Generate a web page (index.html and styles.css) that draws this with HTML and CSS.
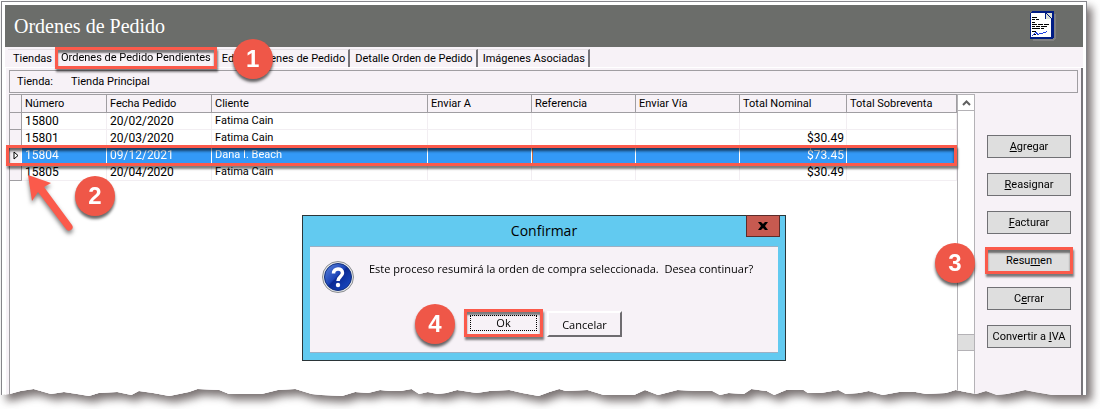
FILE: index.html
```html
<!DOCTYPE html>
<html lang="es">
<head>
    <meta charset="utf-8">
    <meta name="viewport" content="width=device-width, initial-scale=1">
    <title>Ordenes de Pedido</title>
    <link rel="stylesheet" href="styles.css">
</head>
<body>
<div class="shadow">
<div class="window">

    <header class="titlebar">
        <h1>Ordenes de Pedido</h1>
        <svg class="doc-icon" width="26" height="30" viewBox="0 0 26 30" shape-rendering="crispEdges">
            <path d="M3 3h23v24l-3 3H3z" fill="#808080"/>
            <path d="M0 2l2-2h22v26l-2 2H0z" fill="#001c84"/>
            <path d="M1 2h14v6h6v18H1z" fill="#fff"/>
            <path d="M16 2h6v6h-6z" fill="#dfe3d8"/>
            <path d="M16 2l6 6" stroke="#001c84"/>
            <path d="M2 6.500h5M2 8.500h3M6 8.500h3M2 11.500h3M2 13.500h5M8 13.500h5M14 13.500h5M2 15.500h3M6 15.500h4M11 15.500h6M2 17.500h8M11 17.500h3M2 20.500h4M3 23.500h3" stroke="#000"/>
            <path d="M2 25l4-4 2 3 2-2 2 1 2-2 1 1 2-2" fill="none" stroke="#1c3fe0"/>
        </svg>
    </header>

    <nav class="tabs">
        <button type="button" class="tab">Tiendas</button>
        <div class="tab-current">
            <button type="button" class="tab tab-active marked">Ordenes de Pedido Pendientes</button>
            <span class="step step-1">1</span>
        </div>
        <button type="button" class="tab">Editar Ordenes de Pedido</button>
        <button type="button" class="tab">Detalle Orden de Pedido</button>
        <button type="button" class="tab">Imágenes Asociadas</button>
    </nav>

    <main class="page">
        <div class="store"><span>Tienda:</span><span>Tienda Principal</span></div>

        <div class="content">
            <div class="list">
                <table class="orders">
                    <colgroup>
                        <col class="c-mark"><col class="c-num"><col class="c-date"><col class="c-client">
                        <col class="c-ref"><col class="c-ref"><col class="c-ref"><col class="c-total"><col>
                    </colgroup>
                    <thead>
                        <tr>
                            <th></th><th>Número</th><th>Fecha Pedido</th><th>Cliente</th><th>Enviar A</th>
                            <th>Referencia</th><th>Enviar Vía</th><th>Total Nominal</th><th>Total Sobreventa</th>
                        </tr>
                    </thead>
                    <tbody>
                        <tr>
                            <td></td><td class="digits">15800</td><td class="digits">20/02/2020</td><td>Fatima Cain</td><td></td>
                            <td></td><td></td><td class="digits num"></td><td></td>
                        </tr>
                        <tr>
                            <td></td><td class="digits">15801</td><td class="digits">20/03/2020</td><td>Fatima Cain</td><td></td>
                            <td></td><td></td><td class="digits num">$30.49</td><td></td>
                        </tr>
                        <tr class="selected">
                            <td><svg class="pointer" width="6" height="9" viewBox="0 0 6 9"><path d="M1 1v7l4-3.500z" fill="#fff" stroke="#000"/></svg></td>
                            <td class="digits">15804</td><td class="digits">09/12/2021</td><td>Dana I. Beach</td><td></td>
                            <td class="focus"></td><td></td><td class="digits num">$73.45</td><td></td>
                        </tr>
                        <tr>
                            <td></td><td class="digits">15805</td><td class="digits">20/04/2020</td><td>Fatima Cain</td><td></td>
                            <td></td><td></td><td class="digits num">$30.49</td><td></td>
                        </tr>
                    </tbody>
                </table>
                <svg class="arrow" width="60" height="68" viewBox="0 0 60 68">
                    <path d="M8 4L31 12L24 16L52 54Q54 57 51 59Q48 61 46 58L18 21L12 30Z" fill="#fb5a4b"/>
                </svg>
                <span class="step step-2">2</span>
            </div>

            <div class="scrollbar">
                <button type="button" class="scroll-up" aria-label="Subir">
                    <svg width="9" height="6" viewBox="0 0 9 6"><path d="M1 5l3.500-3.500L8 5" fill="none" stroke="#606060" stroke-width="2"/></svg>
                </button>
                <div class="scroll-thumb"></div>
            </div>

            <div class="actions">
                <button type="button" class="action"><u>A</u>gregar</button>
                <button type="button" class="action"><u>R</u>easignar</button>
                <button type="button" class="action"><u>F</u>acturar</button>
                <div class="action-current">
                    <button type="button" class="action marked">Resu<u>m</u>en</button>
                    <span class="step step-3">3</span>
                </div>
                <button type="button" class="action">C<u>e</u>rrar</button>
                <button type="button" class="action">Convertir a <u>I</u>VA</button>
            </div>
        </div>
    </main>

    <div class="dialog" role="dialog" aria-labelledby="dialog-title">
        <h2 id="dialog-title">Confirmar</h2>
        <button type="button" class="close" aria-label="Cerrar">
            <svg width="10" height="8" viewBox="0 0 10 8"><path d="M0 0h3l2 2 2-2h3L7 4l3 4H7L5 6 3 8H0l3-4z" fill="#000"/></svg>
        </button>
        <div class="dialog-body">
            <div class="message">
                <svg width="32" height="32" viewBox="0 0 32 32">
                    <defs>
                        <linearGradient id="ball" x1="0" y1="0" x2="1" y2="1">
                            <stop offset="0" stop-color="#5e86dc"/>
                            <stop offset=".45" stop-color="#1d45b8"/>
                            <stop offset=".5" stop-color="#0a2a94"/>
                            <stop offset="1" stop-color="#1b50cc"/>
                        </linearGradient>
                    </defs>
                    <circle cx="16" cy="16" r="15.500" fill="#e4e6e8" stroke="#8a8d90"/>
                    <circle cx="16" cy="16" r="13.500" fill="url(#ball)" stroke="#12307e"/>
                    <path d="M11.500 12.500C11.500 6.500 20.500 6.500 20.500 12C20.500 15.500 16 15.500 16 20" fill="none" stroke="#fff" stroke-width="3.500"/>
                    <circle cx="16" cy="24" r="2.200" fill="#fff"/>
                </svg>
                <p>Este proceso resumirá la orden de compra seleccionada.&nbsp; Desea continuar?</p>
            </div>
            <div class="dialog-buttons">
                <div class="ok-current">
                    <button type="button" class="dialog-button ok marked"><span>Ok</span></button>
                    <span class="step step-4">4</span>
                </div>
                <button type="button" class="dialog-button">Cancelar</button>
            </div>
        </div>
    </div>

</div>
</div>
</body>
</html>
```
FILE: styles.css
```css
* {
  box-sizing: border-box;
}

body {
  margin: 0;
  background: #fff;
  font-family: Roboto, "Liberation Sans", sans-serif;
  font-size: 11px;
  color: #000;
  overflow: hidden;
}

button {
  font: inherit;
  color: inherit;
  margin: 0;
  padding: 0;
}

.shadow {
  padding: 1px 13px 13px 1px;
  filter: drop-shadow(5px 6px 4px rgba(50, 40, 40, 0.65));
}

/* torn paper edge at the bottom */
.window {
  position: relative;
  display: flex;
  flex-direction: column;
  min-height: calc(100vh - 13px);
  border: 1px solid #85858a;
  border-bottom: 0;
  padding: 3px 3px 0;
  background: #fff;
  clip-path: polygon(0 0, 100% 0, 100% calc(100% - 2px),
    96.8% calc(100% - 2px), 95.2% calc(100% - 5px), 94.3% calc(100% - 7px), 93.5% calc(100% - 5px),
    92.6% calc(100% - 3px), 91.7% calc(100% - 2px), 90.7% calc(100% - 6px), 89.8% calc(100% - 3px),
    88.8% calc(100% - 5px), 87.9% calc(100% - 7px), 87% calc(100% - 4px), 85.2% calc(100% - 3px),
    84.2% calc(100% - 5px), 82.7% calc(100% - 5px), 81.2% calc(100% - 2px), 79.9% calc(100% - 6px),
    79% calc(100% - 4px), 77.8% calc(100% - 3px), 77.1% calc(100% - 7px), 75.5% calc(100% - 4px),
    74.3% calc(100% - 4px), 73.9% calc(100% - 7px), 72.3% calc(100% - 7px), 71.2% calc(100% - 2px),
    70.5% calc(100% - 6px), 69.1% calc(100% - 8px), 68.4% calc(100% - 3px), 67% calc(100% - 4px),
    66.2% calc(100% - 2px), 65.5% calc(100% - 6px), 64% calc(100% - 6px), 62.3% calc(100% - 7px),
    60.5% calc(100% - 2px), 59.3% calc(100% - 7px), 58.3% calc(100% - 2px), 55.5% calc(100% - 2px),
    54% calc(100% - 7px), 52% calc(100% - 6px), 51.4% calc(100% - 8px), 50.5% calc(100% - 5px),
    49.5% calc(100% - 1px), 48% calc(100% - 4px), 46.8% calc(100% - 7px), 45% calc(100% - 6px),
    43.8% calc(100% - 4px), 42% calc(100% - 7px), 41% calc(100% - 4px), 40.2% calc(100% - 3px),
    39.3% calc(100% - 5px), 38.5% calc(100% - 3px), 37.8% calc(100% - 8px), 36.8% calc(100% - 6px),
    35.8% calc(100% - 6px), 34.9% calc(100% - 7px), 33.8% calc(100% - 4px), 32.6% calc(100% - 5px),
    31.4% calc(100% - 1px), 29.5% calc(100% - 2px), 28.6% calc(100% - 3px), 27.1% calc(100% - 8px),
    25.5% calc(100% - 7px), 24% calc(100% - 3px), 22.3% calc(100% - 3px), 21% calc(100% - 3px),
    20.1% calc(100% - 7px), 18.1% calc(100% - 8px), 17.3% calc(100% - 5px), 15.5% calc(100% - 1px),
    14% calc(100% - 4px), 12.7% calc(100% - 6px), 12% calc(100% - 2px), 10.7% calc(100% - 5px),
    9% calc(100% - 4px), 8.1% calc(100% - 1px), 7% calc(100% - 3px), 5.8% calc(100% - 5px),
    4.6% calc(100% - 3px), 3% calc(100% - 8px), 1.8% calc(100% - 6px), 0.8% calc(100% - 3px),
    0 calc(100% - 2px));
}

.titlebar {
  display: flex;
  align-items: center;
  justify-content: space-between;
  height: 42px;
  padding: 0 27px 0 9px;
  background: #6b6d6a;
}

.titlebar h1 {
  margin: 0;
  font-family: "Liberation Serif", serif;
  font-size: 20px;
  font-weight: normal;
  color: #fff;
}

/* tabs */
.tabs {
  display: flex;
  height: 21px;
  padding: 2px 3px 0;
  background: #f7f2f7;
  border-bottom: 1px solid #fff;
}

.tab {
  height: 18px;
  padding: 0 3px 0 5px;
  background: none;
  border: 0;
  border-top: 1px solid #e4dfe4;
  border-right: 2px solid #77757a;
  white-space: nowrap;
}

.tab:first-child {
  border-right: 0;
}

.tab-current {
  position: relative;
  margin-top: -2px;
}

.tab-active {
  height: 22px;
  padding: 0 6px 2px;
  border: 0;
}

.marked {
  position: relative;
}

.marked::after {
  content: "";
  position: absolute;
  inset: 0;
  border: 3px solid #fb5a4b;
  box-shadow: 1px 3px 2px rgba(0, 0, 0, 0.5), inset 0 3px 2px rgba(0, 0, 0, 0.5);
}

/* numbered steps */
.step {
  position: absolute;
  z-index: 2;
  width: 40px;
  height: 40px;
  border-radius: 50%;
  background: #ef5748;
  box-shadow: 0 3px 3px rgba(0, 0, 0, 0.6);
  color: #fff;
  font: bold 24px/40px "Liberation Sans", sans-serif;
  text-align: center;
}

.step-1 {
  top: -8px;
  right: -56px;
}

.step-2 {
  top: 81px;
  left: 65px;
}

.step-3 {
  top: -6px;
  left: -52px;
}

.step-4 {
  top: -7px;
  left: -51px;
}

/* page */
.page {
  flex: 1;
  display: flex;
  flex-direction: column;
  padding: 2px 3px 0;
  background: #f7f2f7;
  border-left: 1px solid #fff;
  border-right: 2px solid #77757a;
}

.store {
  display: flex;
  gap: 18px;
  height: 23px;
  margin-bottom: 1px;
  padding: 0 7px;
  border: 1px solid #a09ea2;
  line-height: 22px;
}

.content {
  flex: 1;
  display: flex;
}

.list {
  position: relative;
  flex: 1;
  background: #fff;
  border-left: 1px solid #a09ea2;
  border-top: 1px solid #a09ea2;
}

.orders {
  width: 100%;
  table-layout: fixed;
  border-collapse: separate;
  border-spacing: 0;
}

.c-mark { width: 12px; }
.c-num { width: 85px; }
.c-date { width: 105px; }
.c-client { width: 216px; }
.c-ref { width: 104px; }
.c-total { width: 107px; }

.orders th,
.orders td {
  height: 17px;
  padding: 0 2px 0 3px;
  font-weight: normal;
  line-height: 16px;
  text-align: left;
  white-space: nowrap;
  border-right: 1px solid #f2eef2;
  border-bottom: 1px solid #f2eef2;
}

.orders th {
  height: 18px;
  background: #f7f2f7;
  line-height: 17px;
  border-color: #a09ea2;
}

.orders td:first-child {
  padding: 0 3px;
  background: #f7f2f7;
  border-color: #a09ea2;
}

.orders .digits {
  font-size: 12px;
}

.orders .num {
  text-align: right;
}

.orders .selected {
  position: relative;
}

.orders .selected td {
  background: #3399f7;
  border-right-color: #fff;
  border-bottom-color: #3399f7;
  color: #fff;
}

.orders .selected td:first-child {
  background: #f7f2f7;
}

.orders .selected .focus {
  border-left: 1px solid #c8683c;
}

/* frame spans the whole row */
.selected td:first-child::after {
  content: "";
  position: absolute;
  inset: -2px 0 -2px -4px;
  border: 3px solid #fb5a4b;
  box-shadow: 1px 3px 2px rgba(0, 0, 0, 0.5), inset 0 3px 3px rgba(0, 0, 0, 0.6);
}

.pointer {
  display: block;
}

.arrow {
  position: absolute;
  top: 76px;
  left: 10px;
  z-index: 1;
  filter: drop-shadow(0 3px 2px rgba(0, 0, 0, 0.5));
}

.scrollbar {
  display: flex;
  flex-direction: column;
  width: 18px;
  background: #fff;
  border: 1px solid #b4b2b6;
  border-bottom: 0;
}

.scroll-up {
  height: 16px;
  background: #fff;
  border: 0;
  border-bottom: 1px solid #b4b2b6;
  line-height: 0;
}

.scroll-thumb {
  height: 17px;
  margin: auto 0 46px;
  background: #dedede;
  border: solid #b4b2b6;
  border-width: 1px 0;
}

.actions {
  display: flex;
  flex-direction: column;
  gap: 15px;
  padding: 41px 7px 0 12px;
}

.action {
  display: block;
  width: 84px;
  height: 23px;
  background: #dedede;
  border: 1px solid #707074;
}

.action-current {
  position: relative;
}

.action-current .marked::after {
  inset: -3px;
}

/* dialog */
.dialog {
  position: absolute;
  top: 213px;
  left: 300px;
  z-index: 1;
  width: 484px;
  padding: 0 7px 7px;
  background: #62caf0;
  border: 1px solid #2b3538;
}

.dialog h2 {
  margin: 0;
  font: 14px/30px "Open Sans", sans-serif;
  text-align: center;
}

.close {
  position: absolute;
  top: -1px;
  right: 5px;
  width: 34px;
  height: 22px;
  background: #c75a50;
  border: 1px solid #5c2c2a;
  line-height: 0;
}

.dialog-body {
  padding: 14px 12px 15px;
  background: #f7f2f7;
  border: solid #9cb0c4;
  border-width: 1px 0;
  font-family: "Open Sans", sans-serif;
}

.message {
  display: flex;
  gap: 15px;
}

.message svg {
  flex-shrink: 0;
}

.message p {
  margin: 0;
  line-height: 16px;
  white-space: nowrap;
}

.dialog-buttons {
  display: flex;
  justify-content: center;
  gap: 6px;
  margin-top: 18px;
}

.ok-current {
  position: relative;
}

.dialog-button {
  display: block;
  width: 75px;
  height: 26px;
  background: #f7f2f7;
  border: 2px solid;
  border-color: #fff #6e6c70 #6e6c70 #fff;
}

.ok {
  height: 24px;
  border: 1px solid #555;
  padding: 3px;
}

.ok span {
  display: block;
  border: 1px dotted #000;
  line-height: 14px;
}

.ok-current .marked::after {
  inset: -3px;
}
```
